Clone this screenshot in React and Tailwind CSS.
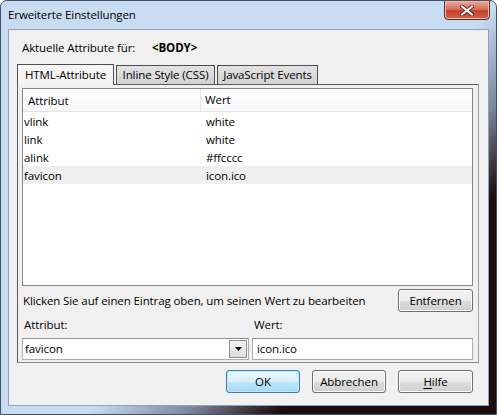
import { useState } from 'react';

const ROWS = [
  { name: 'vlink', value: 'white' },
  { name: 'link', value: 'white' },
  { name: 'alink', value: '#ffcccc' },
  { name: 'favicon', value: 'icon.ico' },
];

const TABS = [
  { label: 'HTML-Attribute', w: 'w-[97px]' },
  { label: 'Inline Style (CSS)', w: 'w-[99px]' },
  { label: 'JavaScript Events', w: 'w-[101px]' },
];

function Button({ children, focused, className = '' }) {
  return (
    <button
      className={`h-[23px] rounded-[3px] border text-[11.5px] tracking-[-0.1px] text-black ${
        focused
          ? 'border-[#3c7fb1] bg-[linear-gradient(#eaf6fd_0%,#d9f0fc_50%,#bee6fd_51%,#a7d9f5_100%)] shadow-[inset_0_0_0_1px_#bfe4f8]'
          : 'border-[#707070] bg-[linear-gradient(#f2f2f2_0%,#ebebeb_50%,#dddddd_51%,#cfcfcf_100%)] shadow-[inset_0_0_0_1px_#fcfcfc]'
      } ${className}`}
    >
      {children}
    </button>
  );
}

export default function App() {
  const [active, setActive] = useState(0);
  const [selected, setSelected] = useState(3);

  return (
    <div className="relative h-[415px] w-[497px] overflow-hidden rounded-t-[7px] border border-[#3f5269] bg-linear-135 from-[#c8dcf1] from-55% via-[#7a869c] via-66% to-[#1c0c0c] to-76% font-['Open_Sans','Noto_Sans',sans-serif] text-[11.5px] tracking-[-0.1px] text-black">
      {/* title bar */}
      <div className="flex h-[28px] items-center pl-[7px] text-[11.5px] text-black">
        Erweiterte Einstellungen
      </div>
      <button className="absolute right-[6px] top-[-1px] flex h-[20px] w-[46px] items-center justify-center rounded-b-[4px] border border-[#6b2a22] bg-[linear-gradient(#e9a99a_0%,#d7715d_45%,#c2412a_55%,#d3654d_100%)] shadow-[inset_0_0_0_1px_#f0b8a8]">
        <svg width="14" height="11" viewBox="0 0 14 11">
          <path d="M2 1.5 L12 9.5 M12 1.5 L2 9.5" stroke="#6b2a22" strokeWidth="4" strokeLinecap="round" />
          <path d="M2 1.5 L12 9.5 M12 1.5 L2 9.5" stroke="#ffffff" strokeWidth="2.2" strokeLinecap="round" />
        </svg>
      </button>

      {/* client area */}
      <div className="mx-[7px] h-[377px] border border-[#8ea3bb] bg-[#f0f0f0]">
        <div className="flex h-[34px] items-center pl-[13px] pt-[1px]">
          <span className="w-[130px]">Aktuelle Attribute für:</span>
          <span className="font-bold">&lt;BODY&gt;</span>
        </div>

        {/* tab strip */}
        <div className="flex h-[20px] items-end gap-[2px] pl-[8px]">
          {TABS.map((t, i) => (
            <button
              key={t.label}
              onClick={() => setActive(i)}
              className={`relative border border-b-0 border-[#4e4e4e] leading-none ${t.w} ${
                i === active
                  ? 'z-10 mb-[-1px] h-[21px] bg-[#f4f4f4]'
                  : 'h-[19px] bg-[linear-gradient(#e2e2e2,#d2d2d2)]'
              }`}
            >
              {t.label}
            </button>
          ))}
        </div>

        {/* tab panel */}
        <div className="ml-[8px] h-[279px] w-[462px] border border-[#5b5b5b] border-r-[#a0a0a0] border-b-[#8a8a8a] bg-[#f0f0f0] pl-[4px] pr-[5px] pt-[3px]">
          <div className="h-[198px] border border-[#828790] bg-white">
            <div className="flex h-[23px] items-center border-b border-[#e3e3e3] bg-[linear-gradient(#ffffff,#f7f8fa)]">
              <div className="h-full w-[178px] border-r border-[#e3e6ea] pl-[5px] leading-[23px]">Attribut</div>
              <div className="pl-[4px]">Wert</div>
            </div>
            {ROWS.map((r, i) => (
              <div
                key={r.name}
                onClick={() => setSelected(i)}
                className={`flex h-[18px] items-center pt-[2px] ${i === selected ? 'bg-[#efefef]' : ''}`}
              >
                <div className="w-[179px] pl-[1px]">{r.name}</div>
                <div className="pl-[4px]">{r.value}</div>
              </div>
            ))}
          </div>

          <div className="mt-[3px] flex items-center justify-between pl-[1px]">
            <span>Klicken Sie auf einen Eintrag oben, um seinen Wert zu bearbeiten</span>
            <Button className="w-[75px]">Entfernen</Button>
          </div>

          <div className="mt-[3px] flex gap-[3px]">
            <div className="w-[227px]">
              <div className="h-[20px] pl-[2px] leading-[20px]">Attribut:</div>
              <div className="mt-[3px] flex h-[22px] items-center border border-[#abadb3] border-t-[#8b8e96] bg-white pl-[2px]">
                <span className="flex-1">favicon</span>
                <span className="mr-[1px] flex h-[18px] w-[18px] items-center justify-center border border-[#8f8f8f] bg-[linear-gradient(#f3f3f3,#dcdcdc)]">
                  <svg width="7" height="4" viewBox="0 0 7 4">
                    <path d="M0 0 H7 L3.5 4 Z" fill="#000" />
                  </svg>
                </span>
              </div>
            </div>
            <div className="w-[221px]">
              <div className="h-[20px] pl-[2px] leading-[20px]">Wert:</div>
              <div className="mt-[3px] flex h-[22px] items-center border border-[#abadb3] border-t-[#8b8e96] bg-white pl-[4px]">
                icon.ico
              </div>
            </div>
          </div>
        </div>

        {/* dialog buttons */}
        <div className="mt-[7px] flex justify-end gap-[12px] pr-[15px]">
          <Button focused className="w-[74px]">OK</Button>
          <Button className="w-[74px]">Abbrechen</Button>
          <Button className="w-[75px]">
            <span className="underline underline-offset-2">H</span>ilfe
          </Button>
        </div>
      </div>
    </div>
  );
}
